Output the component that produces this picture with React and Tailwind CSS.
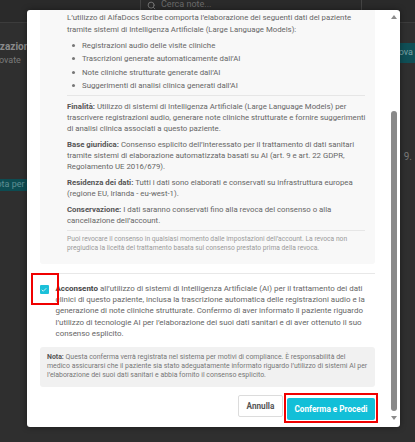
import { Search, Check } from 'lucide-react'

function PageBehind() {
  return (
    <div className="flex h-full flex-col">
      <div className="flex h-[23px] shrink-0 items-start border-b border-[#3c3c3c] bg-[#2a2a2a]">
        <div className="ml-[140px] mt-[-9px] flex h-[28px] w-[222px] items-center gap-[5px] rounded-[3px] border border-[#444] pl-[6px] text-[9px] text-[#6a6a6a]">
          <Search size={9} strokeWidth={2.5} className="text-[#777]" />
          <span>Cerca note...</span>
        </div>
      </div>
      <div className="flex flex-1 justify-between">
        <div className="flex flex-col overflow-hidden">
          <p className="ml-[-35px] mt-[17px] whitespace-nowrap text-[10px] font-bold leading-[14px] text-[#8a8a8a]">
            Organizzazione
          </p>
          <p className="ml-[-7px] whitespace-nowrap text-[9px] leading-[12px] text-[#7a7a7a]">trovate</p>
          <div className="ml-[-12px] mt-[113px] flex h-[12px] w-[120px] items-center bg-[#0d4c52] pl-[2px] text-[9px] text-[#5f8e92]">
            Nota per questo paziente
          </div>
        </div>
        <div className="flex flex-col items-end">
          <div className="mt-[20px] flex h-[20px] w-[40px] items-center justify-end bg-[#0f4f56] pr-[2px] text-[9px] text-[#7aa2a6]">
            Nuova
          </div>
          <p className="mr-[3px] mt-[86px] text-[10px] text-[#777]">9.</p>
        </div>
      </div>
    </div>
  )
}

function Paragraph({ label, children }) {
  return (
    <p className="mt-[5px] leading-[11px]">
      <span className="font-bold text-[#555]">{label}</span> {children}
    </p>
  )
}

const bullets = [
  'Registrazioni audio delle visite cliniche',
  'Trascrizioni generate automaticamente dall’AI',
  'Note cliniche strutturate generate dall’AI',
  'Suggerimenti di analisi clinica generati dall’AI',
]

function Scrollbar() {
  return (
    <div className="flex w-[12px] shrink-0 flex-col items-center pt-[5px] pb-[4px]">
      <svg width="6" height="4" viewBox="0 0 6 4" className="mr-[1px]">
        <path d="M3 0 L6 4 L0 4 Z" fill="#8c8c8c" />
      </svg>
      <div className="mt-[92px] h-[300px] w-[6px] rounded-full bg-[#8a8a8a]" />
      <svg width="6" height="4" viewBox="0 0 6 4" className="mr-[1px] mt-[5px]">
        <path d="M0 0 L6 0 L3 4 Z" fill="#8c8c8c" />
      </svg>
    </div>
  )
}

function ConsentModal() {
  return (
    <div className="absolute left-[27px] top-[10px] flex h-[417px] w-[373px] overflow-hidden rounded-[3px] bg-white shadow-[0_0_6px_rgba(0,0,0,0.4)]">
      <div className="flex flex-1 flex-col px-[13px]">
        <div className="rounded-b-[3px] bg-[#f8f8f8] pb-[11px] pl-[27px] pr-[8px] pt-[2px] text-[7.8px] text-[#666]">
          <p className="leading-[12px]">
            L’utilizzo di AlfaDocs Scribe comporta l’elaborazione dei seguenti dati del paziente tramite sistemi di
            Intelligenza Artificiale (Large Language Models):
          </p>
          <ul className="mt-[4px] flex flex-col gap-[2.3px] pl-[5px]">
            {bullets.map((b) => (
              <li key={b} className="flex items-center gap-[7px] leading-[11px]">
                <span className="h-[3px] w-[3px] rounded-full bg-[#777]" />
                {b}
              </li>
            ))}
          </ul>
          <div className="mb-[5px] mr-[2px] mt-[4px] h-px bg-[#e6e6e6]" />
          <Paragraph label="Finalità:">
            Utilizzo di sistemi di Intelligenza Artificiale (Large Language Models) per trascrivere registrazioni
            audio, generare note cliniche strutturate e fornire suggerimenti di analisi clinica associati a questo
            paziente.
          </Paragraph>
          <Paragraph label="Base giuridica:">
            Consenso esplicito dell’interessato per il trattamento di dati sanitari tramite sistemi di elaborazione
            automatizzata basati su AI (art. 9 e art. 22 GDPR, Regolamento UE 2016/679).
          </Paragraph>
          <Paragraph label="Residenza dei dati:">
            Tutti i dati sono elaborati e conservati su infrastruttura europea (regione EU, Irlanda - eu-west-1).
          </Paragraph>
          <Paragraph label="Conservazione:">
            I dati saranno conservati fino alla revoca del consenso o alla cancellazione dell’account.
          </Paragraph>
          <div className="mb-[4px] mr-[2px] mt-[4px] h-px bg-[#e6e6e6]" />
          <p className="pr-[4px] text-[6.7px] leading-[9px] text-[#9a9a9a]">
            Puoi revocare il consenso in qualsiasi momento dalle impostazioni dell’account. La revoca non pregiudica
            la liceità del trattamento basata sul consenso prestato prima della revoca.
          </p>
        </div>

        <div className="mt-[9px] h-px bg-[#e8e8e8]" />

        <div className="relative mt-[9px] flex gap-[7px]">
          <div className="mt-[2.5px] flex h-[8.5px] w-[8.5px] shrink-0 items-center justify-center rounded-[1px] bg-[#1cc0d9]">
            <Check size={6} strokeWidth={3} className="text-white" />
          </div>
          <p className="text-[7.95px] leading-[11.2px] text-[#666]">
            <span className="font-bold text-[#444]">Acconsento</span> all’utilizzo di sistemi di Intelligenza
            Artificiale (AI) per il trattamento dei dati clinici di questo paziente, inclusa la trascrizione
            automatica delle registrazioni audio e la generazione di note cliniche strutturate. Confermo di aver
            informato il paziente riguardo l’utilizzo di tecnologie AI per l’elaborazione dei suoi dati sanitari e
            di aver ottenuto il suo consenso esplicito.
          </p>
          <div className="absolute left-[-9px] top-[-10px] h-[32px] w-[28px] border-2 border-[#f00000]" />
        </div>

        <div className="mt-[8px] rounded-[3px] bg-[#f1f1f1] px-[7px] pb-[7px] pt-[6.5px] text-[6.95px] leading-[8.7px] text-[#777]">
          <span className="font-bold text-[#555]">Nota:</span> Questa conferma verrà registrata nel sistema per motivi
          di compliance. È responsabilità del medico assicurarsi che il paziente sia stato adeguatamente informato
          riguardo l’utilizzo di sistemi AI per l’elaborazione dei suoi dati sanitari e abbia fornito il consenso
          esplicito.
        </div>

        <div className="mt-[8.5px] flex justify-end gap-[4px]">
          <button className="h-[22px] w-[45px] rounded-[2px] border border-[#dcdcdc] bg-white text-[8.2px] font-bold text-[#555]">
            Annulla
          </button>
          <div className="relative">
            <button className="h-[22px] w-[88px] rounded-[2px] bg-[#12bfd8] text-[8.2px] font-bold text-white">
              Conferma e Procedi
            </button>
            <div className="absolute bottom-[-3px] left-[-3.5px] right-[-3px] top-[-2.5px] border-2 border-[#f00000]" />
          </div>
        </div>
      </div>
      <Scrollbar />
    </div>
  )
}

export default function App() {
  return (
    <div className="relative h-[442px] w-[415px] overflow-hidden bg-[#2f2f2f] font-['Roboto',sans-serif]">
      <PageBehind />
      <ConsentModal />
    </div>
  )
}
